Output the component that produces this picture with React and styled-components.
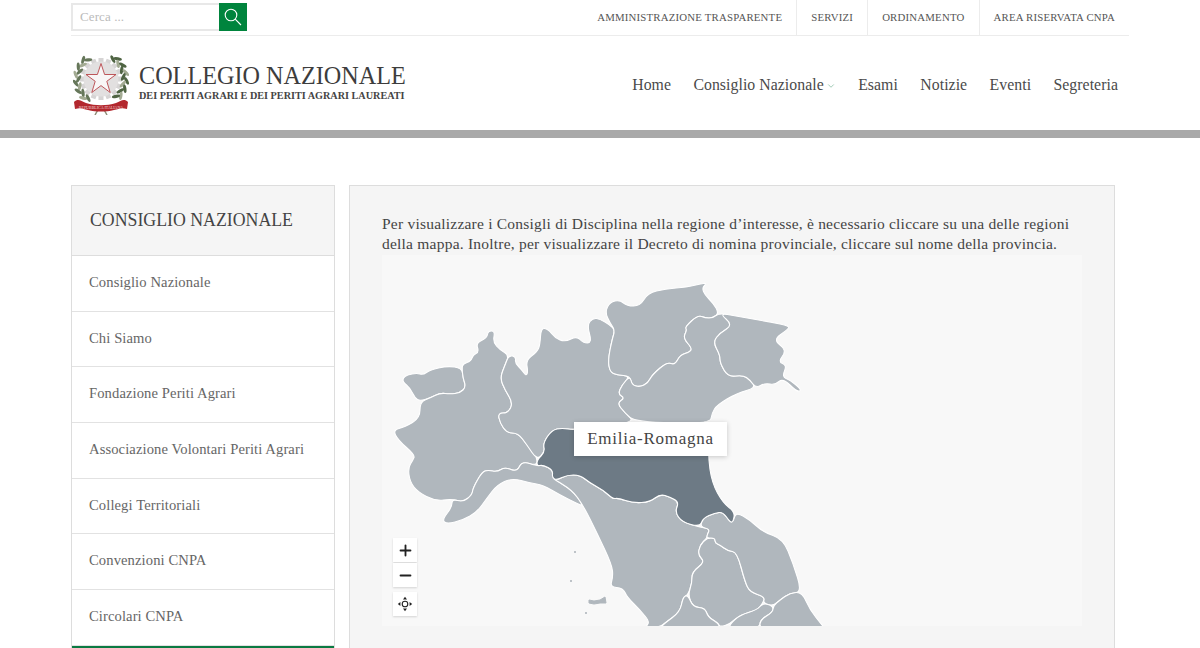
import styled, { createGlobalStyle } from "styled-components"
import { ChevronDown, Plus, Minus } from "lucide-react"

const FONT = `"Liberation Serif", "Noto Serif", serif`

const topLinks = ["Amministrazione Trasparente", "Servizi", "Ordinamento", "Area Riservata CNPA"]
const navLinks = ["Home", "Consiglio Nazionale", "Esami", "Notizie", "Eventi", "Segreteria"]
const sideLinks = [
  "Consiglio Nazionale",
  "Chi Siamo",
  "Fondazione Periti Agrari",
  "Associazione Volontari Periti Agrari",
  "Collegi Territoriali",
  "Convenzioni CNPA",
  "Circolari CNPA",
]

// region outlines, in page pixels (the svg viewBox matches the map box)
const regions = [
  "403,378 407,375 417,373 423,375 430,370 447,366 462,368 463,378 466,387 460,393 450,394 440,393 430,398 420,401 415,398 410,388 403,382",
  "420,402 430,398 440,393 450,394 460,393 466,387 463,378 462,368 463,364 471,361 473,355 479,352 476,343 487,338 488,331 495,331 493,342 500,350 509,355 505,365 500,378 505,390 513,403 508,413 498,413 500,423 507,433 518,433 527,445 537,457 537,466 522,461 517,472 505,467 497,472 488,470 482,472 473,488 472,495 463,502 452,499 435,501 418,492 410,482 408,468 413,460 415,455 398,440 393,430 405,427 420,418",
  "452,499 463,502 472,495 473,488 482,472 488,470 497,472 505,467 517,472 522,461 537,466 543,465 553,470 552,478 572,490 583,505 580,505 560,495 543,485 530,483 512,478 497,485 487,498 477,512 463,520 447,524 442,520 452,507",
  "509,355 516,357 515,363 522,370 526,376 528,372 526,360 537,352 540,345 541,328 548,329 555,338 565,342 577,336 583,343 592,343 587,325 593,318 600,319 610,325 615,330 612,340 608,360 610,372 617,375 630,376 622,385 618,394 625,398 617,403 625,413 635,422 600,426 574,430 562,428 552,430 543,443 545,452 537,460 527,445 518,433 507,433 500,423 498,413 508,413 513,403 505,390 500,378 505,365",
  "605,312 610,302 620,300 627,306 640,306 648,293 665,289 687,287 700,284 707,283 702,288 705,295 713,303 719,313 713,318 705,318 698,315 685,327 687,330 683,338 692,348 690,352 680,355 675,365 667,362 652,375 648,383 640,387 632,385 630,376 617,375 610,372 608,360 612,340 615,330 610,323",
  "630,376 632,385 640,387 648,383 652,375 667,362 675,365 680,355 690,352 692,348 683,338 687,330 685,327 698,315 705,318 713,318 719,313 736,316 733,325 720,333 713,342 720,355 720,363 728,377 743,375 750,380 756,388 737,393 717,405 712,413 710,424 635,422 625,413 617,403 625,398 618,394 622,385",
  "719,313 736,316 753,319 770,322 790,326 787,330 773,340 787,350 778,362 787,365 782,377 790,380 802,390 797,392 783,378 775,385 765,383 756,388 750,380 743,375 728,377 720,363 720,355 713,342 720,333 733,325",
  "552,478 557,480 567,475 580,475 590,483 603,490 613,499 618,498 633,503 650,502 660,494 670,497 679,502 675,512 682,522 700,527 710,529 707,535 707,538 700,545 698,555 705,562 692,572 692,583 688,595 683,597 680,612 665,623 660,627 645,627 650,622 640,610 627,597 623,588 610,587 613,577 612,565 597,533 583,505 572,490",
  "707,538 715,538 715,543 720,545 728,551 737,552 745,582 750,592 765,597 763,603 757,610 740,615 730,624 720,627 718,623 708,617 705,608 693,607 688,595 692,583 692,572 705,562 698,555 700,545",
  "736,512 750,520 763,532 783,539 793,563 802,592 790,593 780,600 773,606 763,603 765,597 750,592 745,582 737,552 728,551 720,545 715,543 715,538 707,538 707,535 710,529 700,527 703,518 715,513 723,512 730,522 733,522",
  "688,595 693,607 705,608 708,617 718,623 720,628 660,628 665,623 680,612 683,597",
  "730,628 730,624 740,615 757,610 763,603 773,606 773,612 760,620 760,628",
  "760,628 760,620 773,612 773,606 780,600 790,593 802,592 810,610 822,625 826,630 770,632",
]

const emilia =
  "574,430 562,428 552,430 543,443 545,452 537,460 537,466 543,465 553,470 552,478 557,480 567,475 580,475 590,483 603,490 613,499 618,498 633,503 650,502 660,494 670,497 679,502 675,512 682,522 700,527 703,518 715,513 723,512 730,522 733,522 735,512 723,503 712,483 708,456 710,424 635,422 600,426"

// rounds the corners of an outline so coasts don't look cut with scissors
function smooth(points) {
  const pts = points.split(" ").map((p) => p.split(",").map(Number))
  const mid = (a, b) => [(a[0] + b[0]) / 2, (a[1] + b[1]) / 2]
  const start = mid(pts[pts.length - 1], pts[0])
  let d = `M${start[0]} ${start[1]}`
  pts.forEach((p, i) => {
    const m = mid(p, pts[(i + 1) % pts.length])
    d += ` Q${p[0]} ${p[1]} ${m[0]} ${m[1]}`
  })
  return d + "Z"
}

// leaves of the wreath, laid along an arc around the emblem centre
const leaves = (from, to, colour) =>
  Array.from({ length: 13 }, (_, i) => {
    const deg = from + ((to - from) * i) / 12
    const rad = (deg * Math.PI) / 180
    return {
      x: 28 + 24 * Math.cos(rad) + (i % 2 ? 1.6 : -1.6) * Math.cos(rad),
      y: 27 + 25 * Math.sin(rad) + (i % 2 ? 1.6 : -1.6) * Math.sin(rad),
      rot: deg + (i % 2 ? 60 : 120),
      colour: i % 3 === 2 ? "#a3ab93" : colour,
    }
  })

const wreath = [...leaves(-125, -235, "#66775a"), ...leaves(-58, 48, "#4f6443")]

const gearTeeth = Array.from({ length: 16 }, (_, i) => i * 22.5)

function Emblem() {
  return (
    <svg width="56" height="63" viewBox="0 0 56 63" aria-hidden="true">
      {gearTeeth.map((a) => (
        <rect key={a} x="25.5" y="6" width="5" height="6" fill="#d6d4d4" transform={`rotate(${a} 28 27)`} />
      ))}
      <circle cx="28" cy="27" r="17.5" fill="#e2e0e0" />
      {wreath.map((l, i) => (
        <ellipse key={i} cx={l.x} cy={l.y} rx="4.2" ry="1.6" fill={l.colour} transform={`rotate(${l.rot} ${l.x} ${l.y})`} />
      ))}
      <polygon
        points="28,11.5 31.6,22.5 43,22.5 33.8,29.3 37.2,40.5 28,33.6 18.8,40.5 22.2,29.3 13,22.5 24.4,22.5"
        fill="#f8f6f6"
        stroke="#b8454a"
        strokeWidth="0.9"
      />
      <path d="M29 54 L34 63 M27 54 L22 63" stroke="#8d8f78" strokeWidth="1.5" />
      <path
        d="M1 50 C5 46 8 49 13 51 C22 54 34 54 43 51 C48 49 51 46 55 50 L54 57 C48 55 46 57 41 58 C33 60 23 60 15 58 C10 57 8 55 2 57 Z"
        fill="#b3282e"
      />
      <text x="28" y="57.3" fontSize="4" fontFamily={FONT} textAnchor="middle" fill="#f2d5d5">
        REPUBBLICA ITALIANA
      </text>
    </svg>
  )
}

function SearchGlyph() {
  return (
    <svg width="18" height="18" viewBox="0 0 18 18" aria-hidden="true" fill="none" stroke="#fff" strokeWidth="1.1">
      <circle cx="7" cy="7" r="5.8" />
      <path d="M11.2 11.2 17 17" />
    </svg>
  )
}

function RecenterIcon() {
  return (
    <svg width="16" height="16" viewBox="0 0 16 16" aria-hidden="true">
      <circle cx="8" cy="8" r="2.8" fill="none" stroke="#222" strokeWidth="1.1" />
      <path d="M8 .8 10 3.4H6ZM8 15.2 6 12.6H10ZM.8 8 3.4 6V10ZM15.2 8 12.6 10V6Z" fill="#222" />
    </svg>
  )
}

export default function App() {
  return (
    <Page>
      <GlobalStyle />
      <Container>
        <TopBar>
          <SearchForm>
            <SearchInput placeholder="Cerca ..." />
            <SearchBtn>
              <SearchGlyph />
            </SearchBtn>
          </SearchForm>
          <TopLinks>
            {topLinks.map((l) => (
              <TopLink key={l}>{l}</TopLink>
            ))}
          </TopLinks>
        </TopBar>
        <Header>
          <Brand>
            <Emblem />
            <BrandText>
              <BrandTitle>COLLEGIO NAZIONALE</BrandTitle>
              <BrandSub>DEI PERITI AGRARI E DEI PERITI AGRARI LAUREATI</BrandSub>
            </BrandText>
          </Brand>
          <Nav>
            {navLinks.map((l) => (
              <NavLink key={l}>
                {l}
                {l === "Consiglio Nazionale" && <Chevron size={10} strokeWidth={2} />}
              </NavLink>
            ))}
          </Nav>
        </Header>
      </Container>
      <Band />
      <Main>
        <Sidebar>
          <SideTitle>CONSIGLIO NAZIONALE</SideTitle>
          {sideLinks.map((l) => (
            <SideItem key={l}>{l}</SideItem>
          ))}
          <SideActive />
        </Sidebar>
        <Content>
          <Intro>
            Per visualizzare i Consigli di Disciplina nella regione d’interesse, è necessario cliccare su una delle
            regioni della mappa. Inoltre, per visualizzare il Decreto di nomina provinciale, cliccare sul nome della
            provincia.
          </Intro>
          <MapBox>
            <MapSvg viewBox="382 255 700 371">
              {regions.map((p) => (
                <Region key={p} d={smooth(p)} />
              ))}
              <Region d={smooth(emilia)} $active />
              <Island points="589,600 594,601 600,600 605,597 606,603 600,603 594,604 589,603" />
              <Island points="574.5,551.5 575.5,551.5 575.5,552.5 574.5,552.5" />
              <Island points="570.5,580.5 571.5,580.5 571.5,581.5 570.5,581.5" />
              <Island points="585.5,612.5 586.5,612.5 586.5,613.5 585.5,613.5" />
            </MapSvg>
            <MapTip>Emilia-Romagna</MapTip>
            <MapControls>
              <ZoomGroup>
                <MapBtn>
                  <Plus size={17} strokeWidth={2.6} />
                </MapBtn>
                <MapBtn>
                  <Minus size={17} strokeWidth={2.6} />
                </MapBtn>
              </ZoomGroup>
              <MapBtn>
                <RecenterIcon />
              </MapBtn>
            </MapControls>
          </MapBox>
        </Content>
      </Main>
    </Page>
  )
}

const GlobalStyle = createGlobalStyle`
  html, body {
    margin: 0;
    padding: 0;
    background: #fff;
    overflow: hidden;
  }
  * {
    box-sizing: border-box;
  }
`

const Page = styled.div`
  height: 648px;
  overflow: hidden;
  font-family: ${FONT};
  color: #444;
`

const Container = styled.div`
  margin: 0 71px;
`

const TopBar = styled.div`
  display: flex;
  justify-content: space-between;
  height: 36px;
  border-bottom: 1px solid #ececec;
`

const SearchForm = styled.div`
  display: flex;
  height: 28px;
  margin-top: 3px;
`

const SearchInput = styled.input`
  width: 148px;
  height: 28px;
  border: 2px solid #e8e8e8;
  border-right: none;
  padding: 0 7px;
  font-family: ${FONT};
  font-size: 13px;
  outline: none;

  &::placeholder {
    color: #bbb;
    letter-spacing: 0.1px;
  }
`

const SearchBtn = styled.div`
  width: 28px;
  height: 28px;
  background: #00843d;
  display: flex;
  align-items: center;
  justify-content: center;
`

const TopLinks = styled.div`
  display: flex;
`

const TopLink = styled.div`
  display: flex;
  align-items: center;
  padding: 0 14px 2px;
  border-left: 1px solid #ececec;
  font-size: 10.8px;
  text-transform: uppercase;
  color: #555;
  letter-spacing: 0.2px;

  &:first-child {
    border-left: none;
  }
`

const Header = styled.div`
  display: flex;
  align-items: center;
  justify-content: space-between;
  height: 94px;
  padding: 0 11px 0 2px;
`

const Brand = styled.div`
  display: flex;
  align-items: center;
  gap: 10px;
`

const BrandText = styled.div`
  display: flex;
  flex-direction: column;
  margin-bottom: 3px;
`

const BrandTitle = styled.div`
  font-size: 24.2px;
  line-height: 25px;
  color: #3d3d3d;
  white-space: nowrap;
`

const BrandSub = styled.div`
  font-size: 10.2px;
  line-height: 11px;
  margin-top: 2px;
  font-weight: bold;
  color: #444;
  white-space: nowrap;
`

const Nav = styled.nav`
  display: flex;
  gap: 22.4px;
  margin-top: 4px;
`

const NavLink = styled.div`
  display: flex;
  align-items: center;
  font-size: 15.8px;
  color: #4a4a4a;
  letter-spacing: 0.05px;
`

const Chevron = styled(ChevronDown)`
  color: #8fc0a8;
  margin-left: 2px;
  margin-top: 2px;
`

const Band = styled.div`
  height: 8px;
  background: #a9a9a9;
`

const Main = styled.div`
  display: flex;
  align-items: flex-start;
  gap: 14px;
  margin: 47px 85px 0 71px;
`

const Sidebar = styled.aside`
  width: 264px;
  flex: none;
  border: 1px solid #ddd;
  border-bottom: none;
`

const SideTitle = styled.div`
  height: 70px;
  display: flex;
  align-items: center;
  padding-left: 18px;
  background: #f5f5f5;
  border-bottom: 1px solid #ddd;
  font-size: 17.8px;
  color: #444;
`

const SideItem = styled.div`
  height: 55.7px;
  display: flex;
  align-items: center;
  padding: 0 0 2px 17px;
  border-bottom: 1px solid #e2e2e2;
  font-size: 14.6px;
  letter-spacing: 0.1px;
  color: #666;
  background: #fff;
`

const SideActive = styled.div`
  height: 56px;
  background: #0a7a42;
`

const Content = styled.div`
  flex: 1;
  height: 520px;
  padding: 28px 32px 0;
  background: #f5f5f5;
  border: 1px solid #ddd;
`

const Intro = styled.p`
  margin: 0;
  font-size: 15.5px;
  line-height: 20px;
  color: #444;
  letter-spacing: 0.22px;
`

const MapBox = styled.div`
  position: relative;
  height: 371px;
  margin-top: 1px;
  background: #f8f8f8;
  overflow: hidden;
`

const MapSvg = styled.svg`
  display: block;
  width: 100%;
  height: 100%;
`

const Region = styled.path`
  fill: ${(props) => (props.$active ? "#6d7a85" : "#b0b7bd")};
  stroke: #fff;
  stroke-width: 1.1;
  stroke-linejoin: round;
`

const Island = styled.polygon`
  fill: #b0b7bd;
  stroke: #b0b7bd;
`

const MapTip = styled.div`
  position: absolute;
  left: 192px;
  top: 167px;
  width: 153px;
  height: 34px;
  display: flex;
  align-items: center;
  justify-content: center;
  background: #fff;
  box-shadow: 0 1px 5px rgba(0, 0, 0, 0.2);
  font-size: 17px;
  letter-spacing: 0.75px;
  color: #444;
`

const MapControls = styled.div`
  position: absolute;
  left: 11px;
  top: 283px;
  display: flex;
  flex-direction: column;
  gap: 5px;
`

const ZoomGroup = styled.div`
  display: flex;
  flex-direction: column;
  gap: 1px;
`

const MapBtn = styled.div`
  width: 24px;
  height: 24px;
  display: flex;
  align-items: center;
  justify-content: center;
  background: #fff;
  color: #222;
  box-shadow: 0 1px 2px rgba(0, 0, 0, 0.15);
`
